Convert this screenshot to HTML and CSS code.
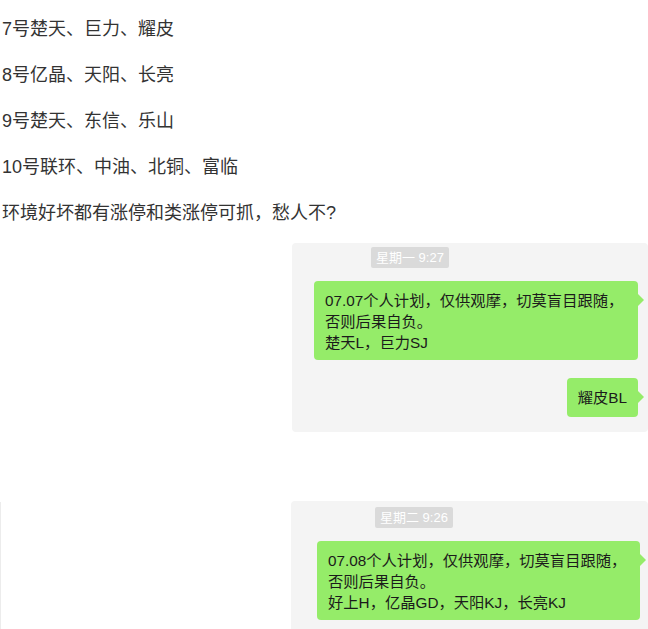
FILE: index.html
```html
<!DOCTYPE html>
<html lang="zh-CN">
<head>
<meta charset="utf-8">
<title>chat</title>
<link rel="stylesheet" href="styles.css">
</head>
<body>
<div class="page">
  <div class="notes">
    <p class="note">7号楚天、巨力、耀皮</p>
    <p class="note">8号亿晶、天阳、长亮</p>
    <p class="note">9号楚天、东信、乐山</p>
    <p class="note">10号联环、中油、北铜、富临</p>
    <p class="note">环境好坏都有涨停和类涨停可抓，愁人不?</p>
  </div>

  <div class="row row-first">
    <div class="panel panel-a">
      <div class="stamp stamp-a">星期一 9:27</div>
      <div class="bubble bubble-wide">07.07个人计划，仅供观摩，切莫盲目跟随，<br>否则后果自负。<br>楚天L，巨力SJ</div>
      <div class="bubble bubble-short">耀皮BL</div>
    </div>
  </div>

  <div class="row row-second">
    <div class="edge"></div>
    <div class="panel panel-b">
      <div class="stamp stamp-b">星期二 9:26</div>
      <div class="bubble bubble-wide bubble-b">07.08个人计划，仅供观摩，切莫盲目跟随，<br>否则后果自负。<br>好上H，亿晶GD，天阳KJ，长亮KJ</div>
    </div>
  </div>
</div>
</body>
</html>
```

FILE: styles.css
```css
html, body {
  margin: 0;
  padding: 0;
  background: #ffffff;
}

body {
  font-family: "Liberation Sans", "Noto Sans CJK SC", sans-serif;
  overflow: hidden;
}

.page {
  width: 648px;
  height: 629px;
  overflow: hidden;
  display: flex;
  flex-direction: column;
}

.notes {
  display: flex;
  flex-direction: column;
  gap: 20px;
  padding: 16px 0 0 2px;
}

.note {
  margin: 0;
  font-size: 18px;
  line-height: 26px;
  color: #333333;
  white-space: nowrap;
}

.row {
  display: flex;
  justify-content: flex-end;
}

.row-first {
  margin-top: 17px;
}

.row-second {
  margin-top: 69px;
  justify-content: space-between;
  align-items: stretch;
}

.edge {
  width: 1px;
  margin-top: 1px;
  background: #ececec;
}

.panel {
  background: #f4f4f4;
  border-radius: 4px;
  display: flex;
  flex-direction: column;
  align-items: flex-start;
}

.panel-a {
  width: 356px;
  height: 189px;
  padding-top: 4px;
  box-sizing: border-box;
}

.panel-b {
  width: 357px;
  height: 140px;
  padding-top: 6px;
  box-sizing: border-box;
  border-radius: 4px 4px 0 0;
}

.stamp {
  background: #dadada;
  color: #ffffff;
  font-size: 13px;
  line-height: 21px;
  height: 21px;
  padding: 0 5px;
  border-radius: 2px;
  white-space: nowrap;
}

.stamp-a {
  margin-left: 79px;
}

.stamp-b {
  margin-left: 84px;
}

.bubble {
  position: relative;
  background: #95ec69;
  color: #1b1b1b;
  font-size: 15.3px;
  line-height: 21px;
  border-radius: 4px;
  white-space: nowrap;
  box-sizing: border-box;
}

.bubble::after {
  content: "";
  position: absolute;
  right: -6px;
  top: 13px;
  width: 0;
  height: 0;
  border-top: 6px solid transparent;
  border-bottom: 6px solid transparent;
  border-left: 6px solid #95ec69;
}

.bubble-wide {
  width: 324px;
  margin-top: 13px;
  margin-left: 22px;
  padding: 9px 10px 7px 11px;
  height: 79px;
}

.bubble-short {
  align-self: flex-end;
  margin-right: 10px;
  margin-top: 18px;
  padding: 9px 11px;
  height: 39px;
}

.bubble-b {
  width: 323px;
  margin-left: 26px;
  margin-top: 13px;
}
```
